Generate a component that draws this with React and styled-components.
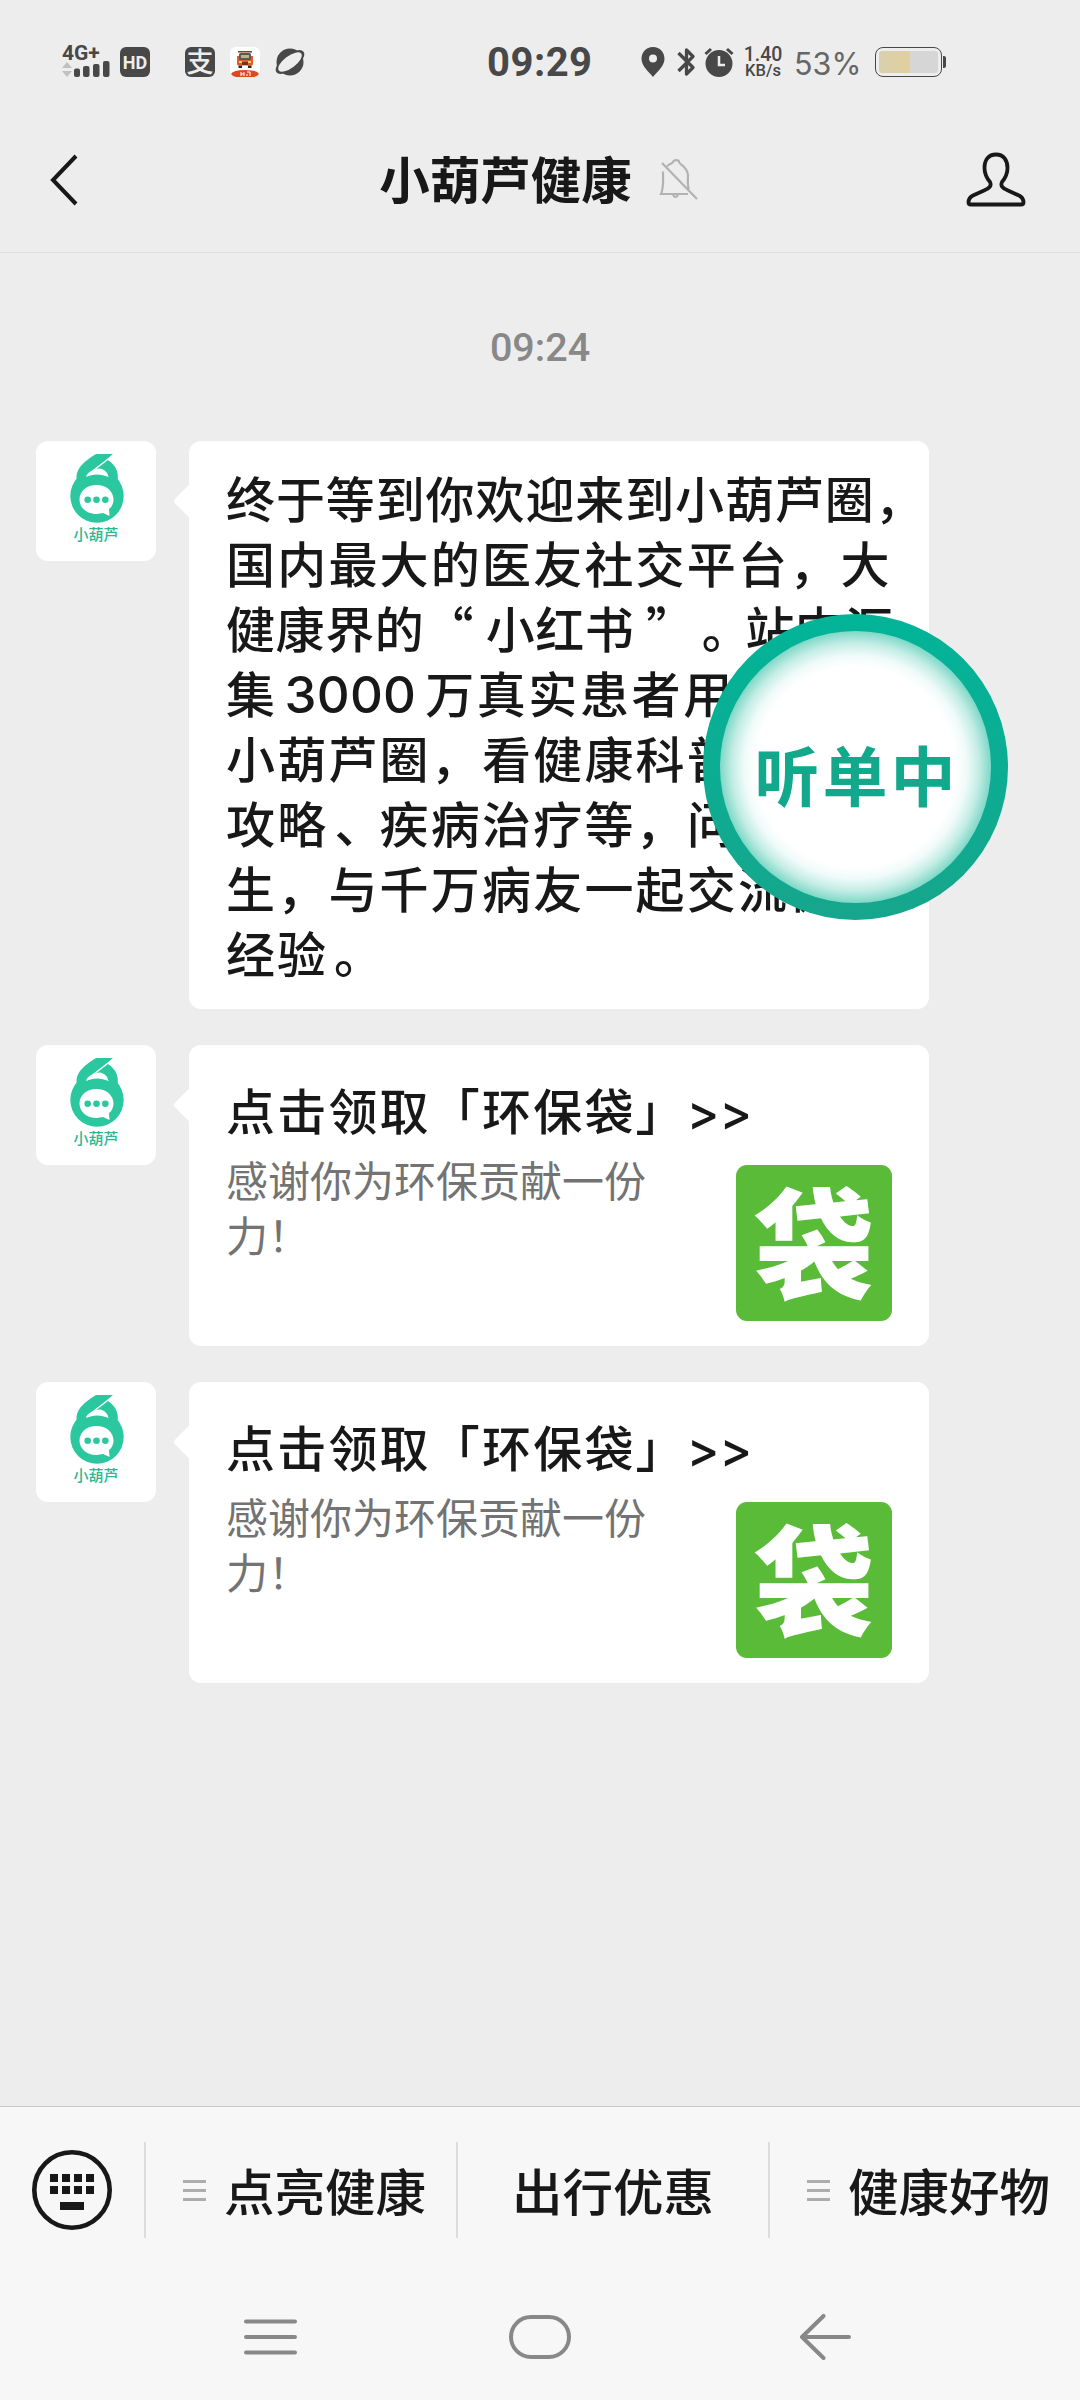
import styled, { createGlobalStyle } from "styled-components";

const lines = [
    { text: "终于等到你欢迎来到小葫芦圈，", gap: 0.9 },
    { text: "国内最大的医友社交平台，大", gap: 2.2 },
    { text: "健康界的“ 小红书 ”。站内汇", gap: 0.6 },
    { text: "集", number: "3000", rest: "万真实患者用户，", gap: 2.6 },
    { text: "小葫芦圈，看健康科普、饮食", gap: 2.2 },
    { text: "攻略、疾病治疗等，问专家医", gap: 2.2 },
    { text: "生，与千万病友一起交流健康", gap: 2.2 },
    { text: "经验。", gap: 2 },
];

const menus = [
    { label: "点亮健康", sub: true },
    { label: "出行优惠", sub: false },
    { label: "健康好物", sub: true },
];

const App = () => {
    return (
        <Screen>
            <GlobalStyle />
            <StatusBar>
                <Signal>
                    <Network>4G+</Network>
                    <SignalBars />
                </Signal>
                <Badge $left={10}>HD</Badge>
                <Badge $left={35} $big>支</Badge>
                <BusIcon />
                <PlanetIcon />
                <Clock>09:29</Clock>
                <PinIcon />
                <BluetoothIcon />
                <AlarmIcon />
                <Speed>
                    <b>1.40</b>
                    <span>KB/s</span>
                </Speed>
                <Percent>53%</Percent>
                <Battery>
                    <Charge />
                </Battery>
                <BatteryTip />
            </StatusBar>
            <Header>
                <BackIcon />
                <Title>
                    <h1>小葫芦健康</h1>
                    <BellIcon />
                </Title>
                <PersonIcon />
            </Header>
            <Chat>
                <Time>09:24</Time>
                <Message>
                    <Avatar />
                    <Bubble>
                        {lines.map((line) => (
                            <Line key={line.text} $gap={line.gap}>
                                {/* full stops and list commas sit nearer the middle of their cell */}
                                {line.text.split(/([。、])/).map((part, i) =>
                                    i % 2 ? <Mark key={i}>{part}</Mark> : part
                                )}
                                {line.number && <Num>{line.number}</Num>}
                                {line.rest}
                            </Line>
                        ))}
                    </Bubble>
                </Message>
                <BagMessage />
                <BagMessage />
            </Chat>
            <MenuBar>
                <KeyboardButton />
                {menus.map((menu) => (
                    <MenuItem key={menu.label} $sub={menu.sub}>
                        {menu.sub && <SubIcon><i /><i /><i /></SubIcon>}
                        <span>{menu.label}</span>
                    </MenuItem>
                ))}
            </MenuBar>
            <NavBar>
                <NavIcons />
            </NavBar>
            <FloatingBall>听单中</FloatingBall>
        </Screen>
    );
};

const BagMessage = () => (
    <Message>
        <Avatar />
        <Card>
            <CardTitle>点击领取「环保袋」<span>&gt;&gt;</span></CardTitle>
            <CardBody>
                <CardText>感谢你为环保贡献一份力！</CardText>
                <Thumb>袋</Thumb>
            </CardBody>
        </Card>
    </Message>
);

const Avatar = () => (
    <AvatarBox>
        <svg width="120" height="84" viewBox="0 0 120 84">
            <path d="M42 44C38 32 42 24 60 13H77L71 18.500C81 24 84 34 80.500 44Z" fill="#2bc8a0" />
            <circle cx="61" cy="55" r="26.700" fill="#2bc8a0" />
            <path d="M78 13.500L56 30.500" stroke="#fff" strokeWidth="1.500" />
            <path d="M50 36C51 31.500 57 28 64 27.500C69 28.500 72 32 72.500 36C65 32.500 57 32.500 50 36Z" fill="#fff" />
            <path d="M60.500 44C51 44 43.500 50 43.500 58.500C43.500 67 51 73 60.500 73C63 73 65 72 67 72L73.500 75L73 68C76 66 77.500 62 77.500 58.500C77.500 50 70 44 60.500 44Z" fill="#fff" />
            <g fill="#2bc8a0">
                <circle cx="51.700" cy="58.700" r="3.300" />
                <circle cx="60.500" cy="58.700" r="3.300" />
                <circle cx="69.300" cy="58.700" r="3.300" />
            </g>
        </svg>
        <AvatarName>小葫芦</AvatarName>
    </AvatarBox>
);

const SignalBars = () => (
    <svg width="48" height="17" viewBox="0 0 48 17">
        <path d="M0 7L5 1L10 7ZM0 10H10L5 16Z" fill="#c0c0c0" />
        <g fill="#484848">
            <rect x="12" y="7.500" width="6" height="8.500" rx="2" />
            <rect x="21" y="5" width="6.500" height="11" rx="2" />
            <rect x="31" y="3" width="6.500" height="13" rx="2" />
            <rect x="41" y="0" width="6.500" height="16" rx="2" />
        </g>
    </svg>
);

const BusIcon = () => (
    <IconBox $left={15}>
        <svg width="30" height="30" viewBox="0 0 30 30">
            <rect width="30" height="30" rx="6" fill="#fff" />
            <rect x="8" y="4" width="14" height="1.500" fill="#8a3a20" />
            <path d="M7 9H23V17Q23 18.500 21 18.500H9Q7 18.500 7 17Z" fill="#d8602a" />
            <rect x="9" y="6" width="12" height="7" rx="1.500" fill="#5c5a4a" />
            <rect x="11" y="8" width="8" height="3" fill="#b8b490" />
            <rect x="9" y="14" width="3" height="2" fill="#f8d060" />
            <rect x="18" y="14" width="3" height="2" fill="#f8d060" />
            <rect x="12" y="15" width="6" height="3" fill="#7c3018" />
            <path d="M8.500 18.500H12V21H8.500ZM18 18.500H21.500V21H18Z" fill="#33261f" />
            <path d="M1 27Q3 23 15 23Q27 23 29 27Q27 30 24 30H6Q3 30 1 27Z" fill="#dc4a1e" />
            <path d="M11 25V29M14 25V29M11 27H14M17 25H20V29M17 29V27" stroke="#fff" strokeWidth="1" fill="none" />
        </svg>
    </IconBox>
);

const PlanetIcon = () => (
    <IconBox $left={15}>
        <svg width="30" height="30" viewBox="0 0 30 30">
            <circle cx="15" cy="15" r="13.500" fill="#484848" />
            <ellipse cx="15" cy="15" rx="17" ry="7.500" transform="rotate(-37 15 15)" fill="#484848" />
            <ellipse cx="15" cy="15" rx="14" ry="6" transform="rotate(-37 15 15)" fill="#ededed" />
        </svg>
    </IconBox>
);

const PinIcon = () => (
    <IconBox>
        <svg width="24" height="30" viewBox="0 0 24 30">
            <path fillRule="evenodd" d="M12 0C5 0 .5 5 .5 12C.5 19 8 25 12 30C16 25 23.500 19 23.500 12C23.500 5 19 0 12 0ZM12 7.500A4 4 0 1 1 12 15.500A4 4 0 1 1 12 7.500Z" fill="#484848" />
        </svg>
    </IconBox>
);

const BluetoothIcon = () => (
    <IconBox $left={12}>
        <svg width="18" height="30" viewBox="0 0 18 30">
            <path d="M1.500 6L16 20.500L9.500 27V3L16 9.500L1.500 24" fill="none" stroke="#484848" strokeWidth="3.300" strokeLinejoin="round" />
        </svg>
    </IconBox>
);

const AlarmIcon = () => (
    <IconBox $left={9}>
        <svg width="30" height="30" viewBox="0 0 30 30">
            <circle cx="15" cy="16.500" r="13.500" fill="#484848" />
            <path d="M1.500 7L7 2M28.500 7L23 2" stroke="#484848" strokeWidth="3" />
            <path d="M15 9V18H21" stroke="#ededed" strokeWidth="2.500" fill="none" />
        </svg>
    </IconBox>
);

const BackIcon = () => (
    <svg width="30" height="54" viewBox="0 0 30 54">
        <path d="M27 3L4 27L27 51" fill="none" stroke="#181818" strokeWidth="4" />
    </svg>
);

const BellIcon = () => (
    <svg width="40" height="42" viewBox="0 0 40 42">
        <g fill="none" stroke="#b2b2b2" strokeWidth="2.200">
            <path d="M4 12.500C4 22 5 28 2 35H29M8 7.500C10 4.500 13 5 14 3C15 .5 20 .5 20 3C21 6 28 7 29 16C29 22 28 26 30 30" />
            <path d="M3 4L38 40M14 36Q16.500 40 19 36" />
        </g>
    </svg>
);

const PersonIcon = () => (
    <svg width="60" height="56" viewBox="0 0 60 56">
        <path d="M30 2.500C22.500 2.500 18.500 8 18.500 16C18.500 22 21.500 27 24 30C26 34 23 36.500 18 38.500L7 43.500C3 45.500 2.500 48 2.500 50.500Q2.500 52.500 5 52.500H55Q57.500 52.500 57.500 50.500C57.500 48 57 45.500 53 43.500L42 38.500C37 36.500 34 34 36 30C38.500 27 41.500 22 41.500 16C41.500 8 37.500 2.500 30 2.500Z" fill="none" stroke="#181818" strokeWidth="3.800" />
    </svg>
);

const KeyboardButton = () => (
    <KeyboardBox>
        <svg width="80" height="80" viewBox="0 0 80 80">
            <circle cx="40" cy="40" r="37.700" fill="none" stroke="#181818" strokeWidth="4.600" />
            <path d="M18 24h8v8h-8zM30 24h8v8h-8zM42 24h8v8h-8zM54 24h8v8h-8zM18 36h8v8h-8zM30 36h8v8h-8zM42 36h8v8h-8zM54 36h8v8h-8zM28 52h24v8h-24z" fill="#181818" />
        </svg>
    </KeyboardBox>
);

const NavIcons = () => (
    <>
        <svg width="54" height="46" viewBox="0 0 54 46">
            <path d="M2 7.500H51M2 23H51M2 38.500H51" stroke="#888" strokeWidth="4" strokeLinecap="round" />
        </svg>
        <Home />
        <svg width="54" height="46" viewBox="0 0 54 46">
            <path d="M25.500 2L4 23L25.500 44M4 23H51" fill="none" stroke="#888" strokeWidth="4" strokeLinecap="round" strokeLinejoin="round" />
        </svg>
    </>
);

const GlobalStyle = createGlobalStyle`
    body {
        margin: 0;
        background: #ededed;
    }

    svg {
        display: block;
        flex: none;
    }
`;

const Screen = styled.div`
    position: relative;
    display: flex;
    flex-direction: column;
    width: 1080px;
    height: 2400px;
    overflow: hidden;
    background: #ededed;
    color: #181818;
    font-family: "Noto Sans CJK SC", sans-serif;
    font-weight: 500;
    text-spacing-trim: space-all;
    white-space: nowrap;
`;

const StatusBar = styled.div`
    box-sizing: border-box;
    display: flex;
    align-items: center;
    height: 108px;
    padding: 16px 0 0 62px;
    color: #484848;
    font-family: Roboto, sans-serif;
`;

const Signal = styled.div`
    display: flex;
    flex-direction: column;
    width: 48px;
`;

const Network = styled.span`
    font-size: 21px;
    font-weight: 700;
    line-height: 15px;
`;

const Badge = styled.div`
    width: 30px;
    height: 30px;
    margin-left: ${(props) => props.$left}px;
    border-radius: 6px;
    background: #484848;
    color: #ededed;
    font-family: ${(props) => (props.$big ? '"Noto Sans CJK SC"' : "Roboto")}, sans-serif;
    font-size: ${(props) => (props.$big ? 27 : 18)}px;
    font-weight: ${(props) => (props.$big ? 500 : 700)};
    line-height: ${(props) => (props.$big ? 28 : 31)}px;
    text-align: center;
`;

const IconBox = styled.div`
    margin-left: ${(props) => props.$left || 0}px;

    svg {
        overflow: visible;
    }
`;

const Clock = styled.div`
    width: 154px;
    margin-left: 182px;
    font-size: 40px;
    font-weight: 700;
    letter-spacing: 0.5px;
`;

const Speed = styled.div`
    display: flex;
    flex-direction: column;
    align-items: center;
    width: 40px;
    margin-left: 9px;
    font-size: 16.500px;
    font-weight: 500;
    line-height: 16px;

    b {
        font-size: 19.500px;
        font-weight: 500;
        line-height: 17px;
    }
`;

const Percent = styled.div`
    width: 67px;
    margin: 2px 0 0 11px;
    color: #666;
    font-family: Inter, sans-serif;
    font-size: 30.500px;
    font-weight: 400;
`;

const Battery = styled.div`
    box-sizing: border-box;
    width: 67px;
    height: 30px;
    margin-left: 14px;
    padding: 3px;
    border: 1.500px solid #484848;
    border-radius: 8px;
`;

const Charge = styled.div`
    height: 100%;
    border-radius: 3px;
    background: linear-gradient(90deg, #d8d0b0, #e2cf9c 53%, #d6d6d6 53%);
`;

const BatteryTip = styled.div`
    width: 3px;
    height: 12px;
    margin-left: 1px;
    border-radius: 0 2px 2px 0;
    background: #484848;
`;

const Header = styled.div`
    box-sizing: border-box;
    display: flex;
    align-items: center;
    justify-content: space-between;
    height: 145px;
    padding: 0 54px 0 49px;
    border-bottom: 1px solid #dedede;
`;

const Title = styled.div`
    display: flex;
    align-items: center;
    gap: 27px;
    margin-left: 33px;

    h1 {
        margin: 0;
        padding-bottom: 6px;
        font-size: 50.500px;
        font-weight: 700;
        line-height: 60px;
    }
`;

const Chat = styled.div`
    display: flex;
    flex-direction: column;
    gap: 36px;
    height: 1853px;
`;

const Time = styled.div`
    padding: 59px 0 22px;
    color: #888;
    font-family: Roboto, sans-serif;
    font-size: 39.500px;
    line-height: 71px;
    text-align: center;
`;

const Message = styled.div`
    display: flex;
    align-items: flex-start;
    gap: 33px;
    padding-left: 36px;
`;

const AvatarBox = styled.div`
    width: 120px;
    height: 120px;
    border-radius: 12px;
    background: #fff;
`;

const AvatarName = styled.div`
    color: #2bb894;
    font-size: 15px;
    font-weight: 500;
    line-height: 17px;
    text-align: center;
`;

const Bubble = styled.div`
    position: relative;
    box-sizing: border-box;
    width: 740px;
    height: 568px;
    padding: 23px 37px;
    border-radius: 12px;
    background: #fff;

    /* little tail that points at the avatar */
    &::before {
        content: "";
        position: absolute;
        top: 47px;
        left: -11px;
        width: 26px;
        height: 26px;
        border-radius: 4px;
        background: #fff;
        transform: rotate(45deg);
    }
`;

const Line = styled.div`
    position: relative;
    height: 65px;
    font-size: 49px;
    letter-spacing: ${(props) => props.$gap}px;
    line-height: 65px;
`;

const Mark = styled.span`
    margin: 0 -6px 0 6px;
`;

const Num = styled.span`
    margin: 0 9px 0 7px;
    font-family: Inter, sans-serif;
    font-size: 51px;
    letter-spacing: 0.2px;
`;

const Card = styled(Bubble)`
    height: 301px;
    padding: 31px 37px 0;
`;

const CardTitle = styled.div`
    font-size: 49px;
    letter-spacing: 2.200px;
    line-height: 66px;

    span {
        font-family: Inter, sans-serif;
        letter-spacing: 0;
    }
`;

const CardBody = styled.div`
    display: flex;
    justify-content: space-between;
`;

const CardText = styled.div`
    width: 430px;
    margin-top: 5px;
    color: #737373;
    font-size: 42px;
    font-weight: 400;
    line-height: 55px;
    white-space: normal;
`;

const Thumb = styled.div`
    width: 156px;
    height: 156px;
    margin-top: 23px;
    border-radius: 11px;
    background: #59bb38;
    color: #fff;
    font-size: 120px;
    font-weight: 900;
    line-height: 146px;
    text-align: center;

    ${CardBody} & {
        margin-top: 19px;
    }
`;

const MenuBar = styled.div`
    box-sizing: border-box;
    display: flex;
    align-items: center;
    height: 168px;
    padding-bottom: 1px;
    border-top: 1px solid #c8c8c8;
    background: #f7f7f7;
`;

const KeyboardBox = styled.div`
    width: 112px;
    padding-left: 32px;
    box-sizing: content-box;
`;

const MenuItem = styled.div`
    box-sizing: border-box;
    display: flex;
    flex: none;
    align-items: center;
    justify-content: center;
    gap: 18px;
    width: 312px;
    height: 96px;
    padding-left: ${(props) => (props.$sub ? 7 : 0)}px;
    border-left: 2px solid #dcdcdc;
    font-size: 50.500px;

    & > span:last-child {
        padding-bottom: 2px;
    }
`;

const SubIcon = styled.span`
    display: flex;
    flex-direction: column;
    gap: 6px;
    width: 23px;

    i {
        height: 3px;
        background: #adadad;
    }
`;

const NavBar = styled.div`
    display: flex;
    flex: 1;
    align-items: flex-start;
    justify-content: space-between;
    padding: 40px 228px 0 244px;
    background: #f7f7f7;
`;

const Home = styled.div`
    box-sizing: border-box;
    width: 62px;
    height: 44px;
    margin: 1px 0 0 -16px;
    border: 4px solid #888;
    border-radius: 22px;
`;

const FloatingBall = styled.div`
    position: absolute;
    top: 614px;
    left: 703px;
    box-sizing: border-box;
    width: 305px;
    height: 306px;
    border: 17px solid transparent;
    border-radius: 50%;
    background:
        radial-gradient(closest-side, #fff 74%, #f0fbf9 82%, #c4ede5 91%, #7ed8c7 100%) padding-box,
        linear-gradient(#02b498, #16a68d) border-box;
    color: #12a88c;
    font-size: 65px;
    font-weight: 700;
    letter-spacing: 3px;
    line-height: 284px;
    text-align: center;
    text-indent: 2px;
`;

export default App;
